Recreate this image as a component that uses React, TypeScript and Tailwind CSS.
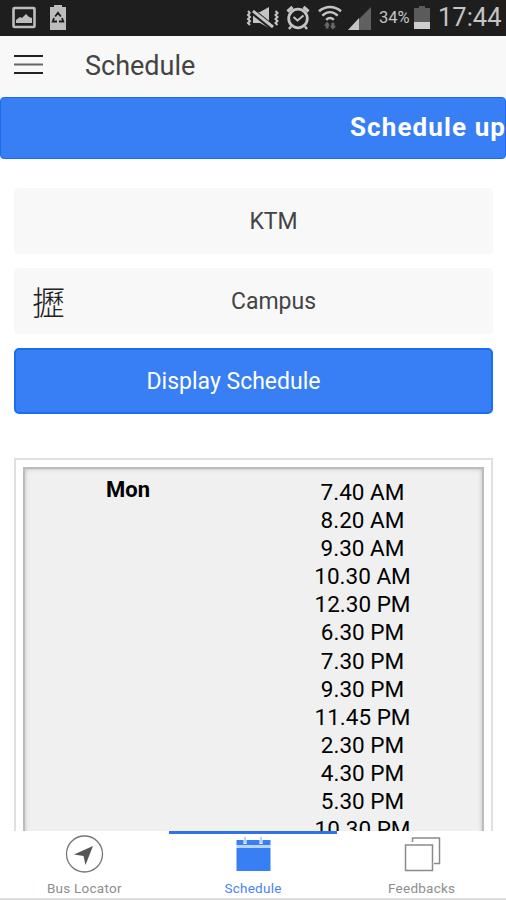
import React from 'react';
import { clsx } from 'clsx';

const times = [
  '7.40 AM',
  '8.20 AM',
  '9.30 AM',
  '10.30 AM',
  '12.30 PM',
  '6.30 PM',
  '7.30 PM',
  '9.30 PM',
  '11.45 PM',
  '2.30 PM',
  '4.30 PM',
  '5.30 PM',
  '10.30 PM',
];

const StatusBar: React.FC = () => (
  <div className="flex h-[35.5px] shrink-0 items-center bg-[#1e1e1e] text-[#c4c4c4]">
    <svg className="ml-3 h-[23px] w-6" viewBox="0 0 24 23" fill="none">
      <rect x="1.5" y="2" width="21" height="19" rx="1" stroke="#bdbdbd" strokeWidth="2.6" />
      <path d="M4 17v-3l4-3 2 1 4-4 3 3 3 1v5z" fill="#bdbdbd" />
    </svg>
    <svg className="ml-[13px] h-[25px] w-[18px]" viewBox="0 0 18 25">
      <path d="M5 0h8v2h4v23H1V2h4z" fill="#bdbdbd" />
      <path
        d="M6.2 11.5 9 7.8l2.8 3.7M13 13l1.3 3.5H10M5 13l-1.3 3.5H8"
        fill="none"
        stroke="#1e1e1e"
        strokeWidth="1.8"
      />
    </svg>
    <svg className="ml-[179px] h-[26px] w-[34px]" viewBox="0 0 34 26" fill="none" stroke="#c4c4c4">
      <path d="M2 6l2 2-2 2 2 2-2 2 2 2-2 2 2 2M29.500 6l2 2-2 2 2 2-2 2 2 2-2 2 2 2" strokeWidth="2" />
      <path d="M7 7h7l9-5v21l-9-5H7z" fill="#c4c4c4" stroke="none" />
      <path d="M6 6l20 16" stroke="#1e1e1e" strokeWidth="6" />
      <path d="M7 6l20 16" strokeWidth="3" />
    </svg>
    <svg className="ml-[6px] h-[26px] w-6" viewBox="0 0 24 26" fill="none" stroke="#c4c4c4">
      <circle cx="12" cy="13.5" r="9.3" strokeWidth="2.8" />
      <path d="M1.5 6.5 6.5 2M22.5 6.5 17.5 2" strokeWidth="3.2" />
      <path d="M5 21.5 3 24M19 21.5l2 2.5" strokeWidth="2.5" />
      <path d="m7.5 12 4 3.5 6-5" strokeWidth="2" />
    </svg>
    <svg className="ml-[8px] h-[26px] w-[24px]" viewBox="0 0 25 26" fill="none">
      <g stroke="#c4c4c4" strokeWidth="2.6">
        <path d="M1 6c7-6 16-6 23 0" />
        <path d="M4.5 10.5c5-4.8 11-4.8 16 0" />
        <path d="M8.5 15c2.5-2.5 5.5-2.5 8 0" />
      </g>
      <path d="M9.5 24v-6M15.5 18v6" stroke="#686868" strokeWidth="3" />
      <path d="m6 21 3.5-4 3 4zM12.5 21l3 4 3.5-4z" fill="#686868" />
    </svg>
    <svg className="ml-[6px] h-[26px] w-[23px]" viewBox="0 0 23 26">
      <path d="M23 2v23H0z" fill="#606060" />
      <path d="M11 13v12H0z" fill="#c4c4c4" />
    </svg>
    <span className="ml-[8px] mt-[2px] w-[32px] whitespace-nowrap text-[16.5px]">34%</span>
    <svg className="ml-[3px] h-[23px] w-[17px]" viewBox="0 0 17 23">
      <path d="M5 0h6v2h5v21H0V2h5z" fill="#5b5b5b" />
      <path d="M0 16h16v7H0z" fill="#cecece" />
    </svg>
    <span className="ml-[7px] whitespace-nowrap text-[25.5px] leading-none">17:44</span>
  </div>
);

const Header: React.FC = () => (
  <header className="flex h-[61.5px] shrink-0 items-center bg-[#f8f8f8] pl-[14px]">
    <svg className="mb-[3px] h-[21px] w-[29px]" viewBox="0 0 29 21" stroke="#222" strokeWidth="2">
      <path d="M0 2h29M0 19h29" />
      <path d="M0 10.5h29" stroke="#666" />
    </svg>
    <h1 className="ml-[42px] text-[27px] text-[#444]">Schedule</h1>
  </header>
);

interface StopButtonProps {
  label: string;
  icon?: string;
}

const StopButton: React.FC<StopButtonProps> = ({ label, icon }) => (
  <button className="relative h-[66px] w-full rounded-[4px] bg-[#f8f8f8] pt-[2px] pl-10 text-[23px] text-[#444]">
    {icon && (
      <span className="absolute left-[18px] top-[10px] font-['Noto_Sans_CJK_TC',sans-serif] text-[33px] leading-[46px] font-light text-[#222]">
        {icon}
      </span>
    )}
    {label}
  </button>
);

interface TabProps {
  label: string;
  active?: boolean;
  children: React.ReactNode;
}

const Tab: React.FC<TabProps> = ({ label, active, children }) => (
  <div
    className={clsx(
      'flex flex-1 flex-col items-center border-t-[3px]',
      active ? 'border-[#2f73e8] text-[#4a82f5]' : 'border-transparent text-[#8e8e8e]'
    )}
  >
    {children}
    <span className="mt-[4px] text-[13.5px] leading-[18px] tracking-[0.25px]">{label}</span>
  </div>
);

const TabBar: React.FC = () => (
  <nav className="flex h-[69px] shrink-0 border-b-2 border-[#dedede] bg-white">
    <Tab label="Bus Locator">
      <svg className="h-[41px] w-[40px]" viewBox="0 0 40 41">
        <circle cx="20.5" cy="20" r="18" fill="none" stroke="#777" strokeWidth="1.3" />
        <path d="M29 12 10 20.5l9.5 1.5 2 9z" fill="#555" />
      </svg>
    </Tab>
    <Tab label="Schedule" active>
      <svg className="h-[41px] w-[40px]" viewBox="0 0 40 41">
        <path d="M3.5 6h34v5h-34zM3.5 14h34v23h-34z" fill="#387ef5" />
        <path d="M3.5 11h34v3h-34z" fill="#bcd3fb" />
        <path d="M12 4v6M28 4v6" stroke="#fff" strokeWidth="3" />
        <path d="M12 3v6M28 3v6" stroke="#8fb0f0" strokeWidth="1.2" />
      </svg>
    </Tab>
    <Tab label="Feedbacks">
      <svg className="h-[41px] w-[40px]" viewBox="0 0 40 41" fill="none" stroke="#8a8a8a" strokeWidth="1.5">
        <path d="M3.5 11h27v25.5h-27zM10.5 8V4h27v25.5H32" />
      </svg>
    </Tab>
  </nav>
);

const App: React.FC = () => (
  <div className="flex h-[900px] w-[506px] flex-col overflow-hidden bg-white font-[Roboto,sans-serif]">
    <StatusBar />
    <Header />
    <div className="flex h-[62px] shrink-0 items-center overflow-hidden rounded-[4px] border border-[#1a6bf0] bg-[#387ef5] pb-[2px] pl-[349px] text-[26px] font-bold tracking-[1.1px] whitespace-nowrap text-white">
      Schedule up
    </div>

    <main className="flex min-h-0 flex-1 flex-col overflow-hidden pt-[29px] pr-[13px] pl-[14px]">
      <div className="flex shrink-0 flex-col gap-[14px]">
        <StopButton label="KTM" />
        <StopButton label="Campus" icon="攊" />
        <button className="h-[66px] w-full rounded-[5px] border-2 border-[#1a6fee] bg-[#387ef5] pt-[2px] pr-10 text-[23px] text-white">
          Display Schedule
        </button>
      </div>

      <div className="mt-[44px] h-[500px] shrink-0 border-2 border-[#e0e0e0] p-[7px]">
        <div className="flex h-full border-2 border-[#bcbcbc] bg-[#f0f0f0] pt-[9px] text-black shadow-[inset_0_0_4px_#bbb]">
          <div className="w-[206px] pt-[1px] text-center text-[22px] leading-[22px] font-bold">Mon</div>
          <ul className="flex-1 pl-[12px] text-center text-[22.5px] leading-[28.1px]">
            {times.map((time) => (
              <li key={time}>{time}</li>
            ))}
          </ul>
        </div>
      </div>
    </main>

    <TabBar />
  </div>
);

export default App;
